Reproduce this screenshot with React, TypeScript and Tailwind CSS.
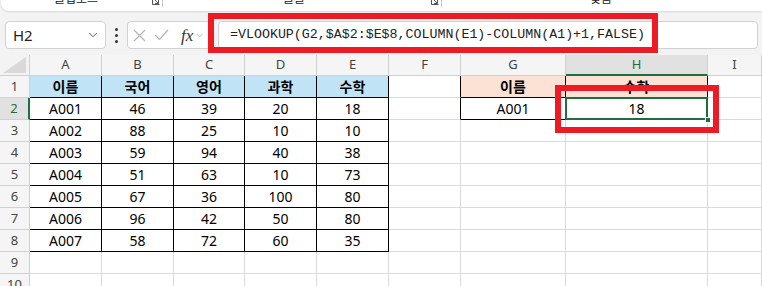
import React from 'react';
import { ChevronDown } from 'lucide-react';

const rows: string[][] = [
  ['이름', '국어', '영어', '과학', '수학'],
  ['A001', '46', '39', '20', '18'],
  ['A002', '88', '25', '10', '10'],
  ['A003', '59', '94', '40', '38'],
  ['A004', '51', '63', '10', '73'],
  ['A005', '67', '36', '100', '80'],
  ['A006', '96', '42', '50', '80'],
  ['A007', '58', '72', '60', '35'],
];

const letters = ['A', 'B', 'C', 'D', 'E', 'F', 'G', 'H', 'I'];

const Launcher = () => (
  <svg width="8" height="8" viewBox="0 0 8 8" className="text-[#555]">
    <path d="M1 1 L6 6 M3 6.5 H6.5 V3 M0.5 0.5 V7.5 H7.5" fill="none" stroke="currentColor" strokeWidth="1" />
  </svg>
);

function cellValue(r: number, c: number): string {
  if (r <= 8 && c < 5) return rows[r - 1][c];
  if (r === 1 && c === 6) return '이름';
  if (r === 1 && c === 7) return '수학';
  if (r === 2 && c === 6) return 'A001';
  if (r === 2 && c === 7) return '18';
  return '';
}

function cellClass(r: number, c: number): string {
  if (r <= 8 && c < 5) {
    return r === 1
      ? 'bg-[#c0e4f5] font-bold border-r border-b border-black'
      : 'bg-white border-r border-b border-black';
  }
  if ((c === 6 || c === 7) && r <= 2) {
    return r === 1
      ? 'bg-[#fbe2d5] font-bold border-r border-b border-black'
      : 'bg-white border-r border-b border-black';
  }
  if (c === 5 && r <= 2) return 'bg-white border-r border-r-black border-b border-b-[#dadada]';
  return 'bg-white border-r border-b border-[#dadada]';
}

function Cell({ r, c }: { r: number; c: number }) {
  const selected = r === 2 && c === 7;
  return (
    <div className={`relative flex items-center justify-center text-[14px] text-black ${cellClass(r, c)}`}>
      {cellValue(r, c)}
      {selected && (
        <>
          <div className="absolute left-[-1px] top-[-1px] right-[-1px] bottom-[-1px] border-2 border-[#1e6e42] z-10" />
          <div className="absolute left-[139px] top-[19px] w-[6px] h-[6px] bg-[#1e6e42] border border-white z-10" />
          <div className="absolute left-[-11px] top-[-13px] w-[164px] h-[48px] border-[6px] border-[#ed1c24] z-20" />
        </>
      )}
    </div>
  );
}

export default function App() {
  const rowNums = [1, 2, 3, 4, 5, 6, 7, 8, 9, 10];
  return (
    <div className="relative w-[762px] h-[286px] overflow-hidden bg-[#f3f3f3] font-['Noto_Sans','Noto_Sans_CJK_KR',sans-serif]">
      {/* ribbon bottom */}
      <div className="h-[13px]">
        <div className="ml-[1px] h-[11px] bg-white rounded-bl-[8px] shadow-[0_1px_2px_rgba(0,0,0,0.12)] flex overflow-hidden text-[12px] leading-[12px] text-[#222]">
          <div className="w-[162px] flex relative border-r border-[#c8c8c8] h-[7px]">
            <span className="ml-[53px] -mt-[7px]">클립보드</span>
            <span className="ml-auto mr-[2px] -mt-[3px]"><Launcher /></span>
          </div>
          <div className="w-[279px] flex relative border-r border-[#c8c8c8] h-[7px]">
            <span className="ml-[120px] -mt-[7px]">글꼴</span>
            <span className="ml-auto mr-[2px] -mt-[3px]"><Launcher /></span>
          </div>
          <div className="flex-1 flex">
            <span className="ml-[148px] -mt-[7px]">맞춤</span>
          </div>
        </div>
      </div>

      {/* formula bar */}
      <div className="h-[42px] flex items-start pt-[8px]">
        <div className="ml-[5px] w-[101px] h-[28px] bg-white border border-[#d1d1d1] rounded-[4px] flex items-center pl-[7px] pr-[5px]">
          <span className="text-[15px] text-[#222]">H2</span>
          <ChevronDown className="ml-auto w-[14px] h-[14px] text-[#444]" strokeWidth={1.5} />
        </div>
        <div className="w-[21px] h-[28px] flex flex-col items-center justify-center gap-[3px]">
          <span className="w-[3px] h-[3px] rounded-full bg-[#333]" />
          <span className="w-[3px] h-[3px] rounded-full bg-[#333]" />
          <span className="w-[3px] h-[3px] rounded-full bg-[#333]" />
        </div>
        <div className="w-[86px] h-[28px] bg-white border border-[#d1d1d1] rounded-[4px] flex items-center pl-[5px]">
          <svg width="13" height="13" viewBox="0 0 13 13" className="text-[#b4b4b4]">
            <path d="M1 1 L12 12 M12 1 L1 12" stroke="currentColor" strokeWidth="1.2" />
          </svg>
          <svg width="15" height="12" viewBox="0 0 15 12" className="ml-[8px] text-[#b4b4b4]">
            <path d="M1 6 L5.5 10.5 L14 1" fill="none" stroke="currentColor" strokeWidth="1.2" />
          </svg>
          <span className="ml-[12px] font-['Liberation_Serif',serif] italic text-[17px] leading-none text-[#333]">fx</span>
          <ChevronDown className="ml-[1px] w-[11px] h-[11px] text-[#999]" strokeWidth={1.5} />
        </div>
        <div className="ml-[5px] w-[540px] h-[28px] bg-white border border-[#d1d1d1] rounded-[4px] flex items-center pl-[11px] font-['Liberation_Mono',monospace] text-[13.3px] text-[#222]">
          =VLOOKUP(G2,$A$2:$E$8,COLUMN(E1)-COLUMN(A1)+1,FALSE)
        </div>
      </div>
      <div className="absolute left-[208px] top-[13px] w-[450px] h-[40px] border-[6px] border-[#ed1c24]" />

      {/* sheet */}
      <div className="grid grid-cols-[30px_72px_72px_71px_72px_72px_72px_105px_142px_54px] grid-rows-[21px_repeat(10,22px)] bg-white">
        <div className="bg-[#f3f3f3] border-r border-b border-[#d0d0d0]">
          <svg width="29" height="20" viewBox="0 0 29 20">
            <polygon points="26,2 26,18 3,18" fill="#d9d9d9" />
          </svg>
        </div>
        {letters.map((l) =>
          l === 'H' ? (
            <div key={l} className="bg-[#e1e1e1] border-r border-[#d0d0d0] border-b-2 border-b-[#1e6e42] flex items-center justify-center text-[13px] text-[#1e6e42]">
              {l}
            </div>
          ) : (
            <div key={l} className="bg-[#f5f5f5] border-r border-b border-[#d0d0d0] flex items-center justify-center text-[13px] text-[#444]">
              {l}
            </div>
          )
        )}
        {rowNums.map((r) => (
          <React.Fragment key={r}>
            {r === 2 ? (
              <div className="bg-[#e1e1e1] border-r-2 border-r-[#1e6e42] border-b border-b-[#d0d0d0] flex items-center justify-center text-[13px] text-[#1e6e42]">
                {r}
              </div>
            ) : (
              <div className="bg-[#f5f5f5] border-r border-b border-[#d0d0d0] flex items-center justify-center text-[13px] text-[#444]">
                {r}
              </div>
            )}
            {letters.map((_, c) => (
              <Cell key={c} r={r} c={c} />
            ))}
          </React.Fragment>
        ))}
      </div>
    </div>
  );
}
